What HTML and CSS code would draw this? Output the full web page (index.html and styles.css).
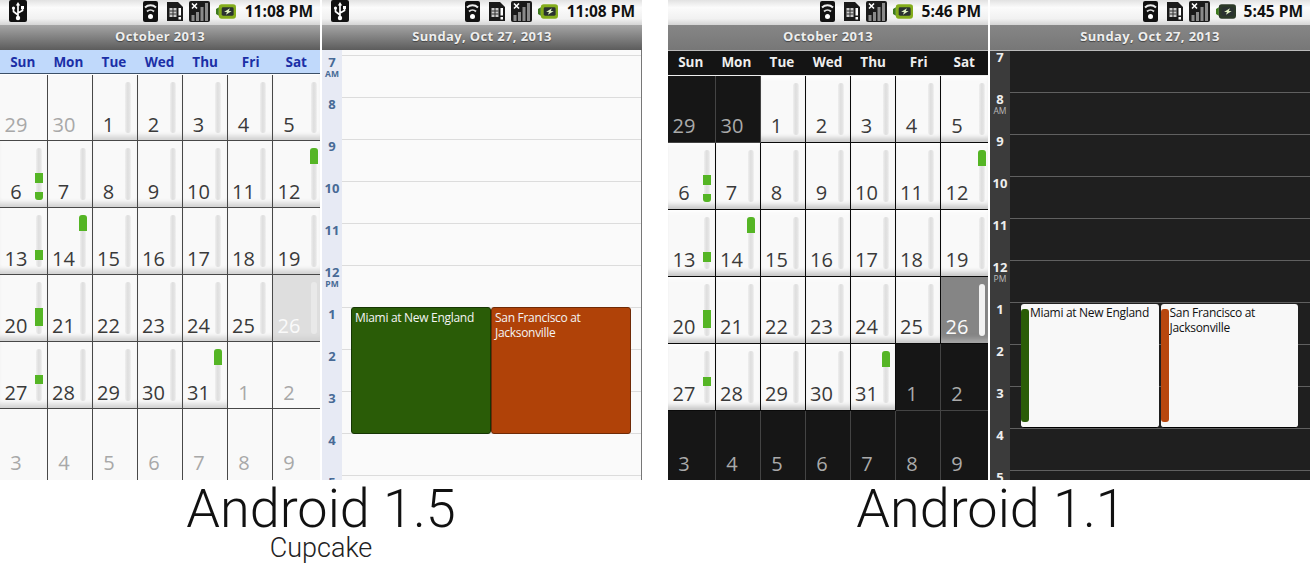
FILE: index.html
```html
<!DOCTYPE html>
<html lang="en">
<head>
<meta charset="utf-8">
<title>Android calendar comparison</title>
<link rel="stylesheet" href="styles.css">
</head>
<body>
<svg class="defs" aria-hidden="true">
  <symbol id="usb" viewBox="0 0 18 22"><rect width="18" height="22" rx="2" fill="#111"/><path d="M9 19V5M9 15L4.5 11.5V9M9 13L13.500 10.500V8.500" fill="none" stroke="#fff" stroke-width="1.700"/><path d="M9 2l2.200 3.500H6.800z" fill="#fff"/><circle cx="9" cy="18" r="2.200" fill="#fff"/><circle cx="4.500" cy="8" r="1.600" fill="#fff"/><rect x="12" y="6" width="3" height="3" fill="#fff"/></symbol>
  <symbol id="wifi" viewBox="0 0 15 21"><rect width="15" height="21" rx="2" fill="#111"/><path d="M2 6.500a8 8 0 0 1 11 0" fill="none" stroke="#eee" stroke-width="2"/><path d="M4 10.500a5 5 0 0 1 7 0" fill="none" stroke="#ddd" stroke-width="1.800"/><circle cx="7.500" cy="15.500" r="2.500" fill="#fff"/></symbol>
  <symbol id="sim" viewBox="0 0 16 21"><path d="M0 1h11l5 5v14H0z" fill="#1a1a1a"/><rect x="2.500" y="7" width="7" height="9" fill="#ccc"/><path d="M2.500 10h7M2.500 13h7M6 7v9" stroke="#333"/><rect x="11.500" y="7" width="2.500" height="7.500" fill="#fff"/><rect x="11.500" y="16" width="2.500" height="2.500" fill="#fff"/></symbol>
  <symbol id="signal" viewBox="0 0 21 21"><rect width="21" height="21" rx="2" fill="#1a1a1a"/><path d="M3 2.500l5 5M8 2.500l-5 5" stroke="#fff" stroke-width="1.600"/><rect x="2.500" y="14" width="3" height="6" fill="#8a8a8a"/><rect x="7" y="11" width="3" height="9" fill="#8a8a8a"/><rect x="11.500" y="6" width="3" height="14" fill="#8a8a8a"/><rect x="16" y="2" width="3" height="18" fill="#8a8a8a"/></symbol>
  <symbol id="batt" viewBox="0 0 21 15"><path d="M0 5l3-2v9L0 10z" fill="#3e7a1e"/><rect x="3" y="0" width="18" height="15" rx="3" fill="currentColor"/><rect x="6" y="3" width="12.500" height="9" rx="1.500" fill="#2a3230"/><path d="M14.500 4L8.500 8h3l-1 3 6-4h-3z" fill="#dff0c0"/></symbol>
</svg>

<div class="page">
  <section class="group">
    <div class="screens">
      <div class="screen light">
        <div class="status">
          <svg class="i-usb"><use href="#usb"/></svg>
          <div class="tray">
            <svg class="i-wifi"><use href="#wifi"/></svg>
            <svg class="i-sim"><use href="#sim"/></svg>
            <svg class="i-signal"><use href="#signal"/></svg>
            <svg class="i-batt"><use href="#batt"/></svg>
            <span class="clock">11:08 PM</span>
          </div>
        </div>
        <div class="title">October 2013</div>
        <div class="days"><span>Sun</span><span>Mon</span><span>Tue</span><span>Wed</span><span>Thu</span><span>Fri</span><span>Sat</span></div>
        <div class="month">
          <div class="cell other"><span class="num">29</span></div>
          <div class="cell other"><span class="num">30</span></div>
          <div class="cell"><span class="num">1</span><span class="bar"></span></div>
          <div class="cell"><span class="num">2</span><span class="bar"></span></div>
          <div class="cell"><span class="num">3</span><span class="bar"></span></div>
          <div class="cell"><span class="num">4</span><span class="bar"></span></div>
          <div class="cell"><span class="num">5</span><span class="bar"></span></div>
          <div class="cell"><span class="num">6</span><span class="bar"><i class="ev" style="top:25px;height:10px"></i><i class="ev ev-end" style="top:44px;height:8px"></i></span></div>
          <div class="cell"><span class="num">7</span><span class="bar"></span></div>
          <div class="cell"><span class="num">8</span><span class="bar"></span></div>
          <div class="cell"><span class="num">9</span><span class="bar"></span></div>
          <div class="cell"><span class="num">10</span><span class="bar"></span></div>
          <div class="cell"><span class="num">11</span><span class="bar"></span></div>
          <div class="cell"><span class="num">12</span><span class="bar"><i class="ev ev-start" style="top:0;height:16px"></i></span></div>
          <div class="cell"><span class="num">13</span><span class="bar"><i class="ev" style="top:35px;height:10px"></i></span></div>
          <div class="cell"><span class="num">14</span><span class="bar"><i class="ev ev-start" style="top:0;height:16px"></i></span></div>
          <div class="cell"><span class="num">15</span><span class="bar"></span></div>
          <div class="cell"><span class="num">16</span><span class="bar"></span></div>
          <div class="cell"><span class="num">17</span><span class="bar"></span></div>
          <div class="cell"><span class="num">18</span><span class="bar"></span></div>
          <div class="cell"><span class="num">19</span><span class="bar"></span></div>
          <div class="cell"><span class="num">20</span><span class="bar"><i class="ev" style="top:26px;height:18px"></i></span></div>
          <div class="cell"><span class="num">21</span><span class="bar"></span></div>
          <div class="cell"><span class="num">22</span><span class="bar"></span></div>
          <div class="cell"><span class="num">23</span><span class="bar"></span></div>
          <div class="cell"><span class="num">24</span><span class="bar"></span></div>
          <div class="cell"><span class="num">25</span><span class="bar"></span></div>
          <div class="cell sel"><span class="num">26</span><span class="bar"></span></div>
          <div class="cell"><span class="num">27</span><span class="bar"><i class="ev" style="top:26px;height:9px"></i></span></div>
          <div class="cell"><span class="num">28</span><span class="bar"></span></div>
          <div class="cell"><span class="num">29</span><span class="bar"></span></div>
          <div class="cell"><span class="num">30</span><span class="bar"></span></div>
          <div class="cell"><span class="num">31</span><span class="bar"><i class="ev ev-start" style="top:0;height:16px"></i></span></div>
          <div class="cell other"><span class="num">1</span></div>
          <div class="cell other"><span class="num">2</span></div>
          <div class="cell other"><span class="num">3</span></div>
          <div class="cell other"><span class="num">4</span></div>
          <div class="cell other"><span class="num">5</span></div>
          <div class="cell other"><span class="num">6</span></div>
          <div class="cell other"><span class="num">7</span></div>
          <div class="cell other"><span class="num">8</span></div>
          <div class="cell other"><span class="num">9</span></div>
        </div>
      </div>

      <div class="screen light">
        <div class="status">
          <svg class="i-usb"><use href="#usb"/></svg>
          <div class="tray">
            <svg class="i-wifi"><use href="#wifi"/></svg>
            <svg class="i-sim"><use href="#sim"/></svg>
            <svg class="i-signal"><use href="#signal"/></svg>
            <svg class="i-batt"><use href="#batt"/></svg>
            <span class="clock">11:08 PM</span>
          </div>
        </div>
        <div class="title">Sunday, Oct 27, 2013</div>
        <div class="agenda">
          <div class="hour"><span class="label">7<small>AM</small></span><span class="slot"></span></div>
          <div class="hour"><span class="label">8</span><span class="slot"></span></div>
          <div class="hour"><span class="label">9</span><span class="slot"></span></div>
          <div class="hour"><span class="label">10</span><span class="slot"></span></div>
          <div class="hour"><span class="label">11</span><span class="slot"></span></div>
          <div class="hour"><span class="label">12<small>PM</small></span><span class="slot"></span></div>
          <div class="hour"><span class="label">1</span><span class="slot"></span></div>
          <div class="hour"><span class="label">2</span><span class="slot"></span></div>
          <div class="hour"><span class="label">3</span><span class="slot"></span></div>
          <div class="hour"><span class="label">4</span><span class="slot"></span></div>
          <div class="hour"><span class="label">5</span><span class="slot"></span></div>
        </div>
        <div class="events">
          <div class="event green">Miami at New England</div>
          <div class="event orange">San Francisco at Jacksonville</div>
        </div>
      </div>
    </div>
    <h2 class="caption">Android 1.5</h2>
    <p class="sub">Cupcake</p>
  </section>

  <section class="group">
    <div class="screens">
      <div class="screen dark">
        <div class="status">
          <div class="tray">
            <svg class="i-wifi"><use href="#wifi"/></svg>
            <svg class="i-sim"><use href="#sim"/></svg>
            <svg class="i-signal"><use href="#signal"/></svg>
            <svg class="i-batt"><use href="#batt"/></svg>
            <span class="clock">5:46 PM</span>
          </div>
        </div>
        <div class="title">October 2013</div>
        <div class="days"><span>Sun</span><span>Mon</span><span>Tue</span><span>Wed</span><span>Thu</span><span>Fri</span><span>Sat</span></div>
        <div class="month">
          <div class="cell other"><span class="num">29</span></div>
          <div class="cell other"><span class="num">30</span></div>
          <div class="cell"><span class="num">1</span><span class="bar"></span></div>
          <div class="cell"><span class="num">2</span><span class="bar"></span></div>
          <div class="cell"><span class="num">3</span><span class="bar"></span></div>
          <div class="cell"><span class="num">4</span><span class="bar"></span></div>
          <div class="cell"><span class="num">5</span><span class="bar"></span></div>
          <div class="cell"><span class="num">6</span><span class="bar"><i class="ev" style="top:25px;height:10px"></i><i class="ev ev-end" style="top:44px;height:8px"></i></span></div>
          <div class="cell"><span class="num">7</span><span class="bar"></span></div>
          <div class="cell"><span class="num">8</span><span class="bar"></span></div>
          <div class="cell"><span class="num">9</span><span class="bar"></span></div>
          <div class="cell"><span class="num">10</span><span class="bar"></span></div>
          <div class="cell"><span class="num">11</span><span class="bar"></span></div>
          <div class="cell"><span class="num">12</span><span class="bar"><i class="ev ev-start" style="top:0;height:16px"></i></span></div>
          <div class="cell"><span class="num">13</span><span class="bar"><i class="ev" style="top:35px;height:10px"></i></span></div>
          <div class="cell"><span class="num">14</span><span class="bar"><i class="ev ev-start" style="top:0;height:16px"></i></span></div>
          <div class="cell"><span class="num">15</span><span class="bar"></span></div>
          <div class="cell"><span class="num">16</span><span class="bar"></span></div>
          <div class="cell"><span class="num">17</span><span class="bar"></span></div>
          <div class="cell"><span class="num">18</span><span class="bar"></span></div>
          <div class="cell"><span class="num">19</span><span class="bar"></span></div>
          <div class="cell"><span class="num">20</span><span class="bar"><i class="ev" style="top:26px;height:18px"></i></span></div>
          <div class="cell"><span class="num">21</span><span class="bar"></span></div>
          <div class="cell"><span class="num">22</span><span class="bar"></span></div>
          <div class="cell"><span class="num">23</span><span class="bar"></span></div>
          <div class="cell"><span class="num">24</span><span class="bar"></span></div>
          <div class="cell"><span class="num">25</span><span class="bar"></span></div>
          <div class="cell sel"><span class="num">26</span><span class="bar"></span></div>
          <div class="cell"><span class="num">27</span><span class="bar"><i class="ev" style="top:26px;height:9px"></i></span></div>
          <div class="cell"><span class="num">28</span><span class="bar"></span></div>
          <div class="cell"><span class="num">29</span><span class="bar"></span></div>
          <div class="cell"><span class="num">30</span><span class="bar"></span></div>
          <div class="cell"><span class="num">31</span><span class="bar"><i class="ev ev-start" style="top:0;height:16px"></i></span></div>
          <div class="cell other"><span class="num">1</span></div>
          <div class="cell other"><span class="num">2</span></div>
          <div class="cell other"><span class="num">3</span></div>
          <div class="cell other"><span class="num">4</span></div>
          <div class="cell other"><span class="num">5</span></div>
          <div class="cell other"><span class="num">6</span></div>
          <div class="cell other"><span class="num">7</span></div>
          <div class="cell other"><span class="num">8</span></div>
          <div class="cell other"><span class="num">9</span></div>
        </div>
      </div>

      <div class="screen dark">
        <div class="status">
          <div class="tray">
            <svg class="i-wifi"><use href="#wifi"/></svg>
            <svg class="i-sim"><use href="#sim"/></svg>
            <svg class="i-signal"><use href="#signal"/></svg>
            <svg class="i-batt i-batt-low"><use href="#batt"/></svg>
            <span class="clock">5:45 PM</span>
          </div>
        </div>
        <div class="title">Sunday, Oct 27, 2013</div>
        <div class="agenda">
          <div class="hour"><span class="label">7</span><span class="slot"></span></div>
          <div class="hour"><span class="label">8<small>AM</small></span><span class="slot"></span></div>
          <div class="hour"><span class="label">9</span><span class="slot"></span></div>
          <div class="hour"><span class="label">10</span><span class="slot"></span></div>
          <div class="hour"><span class="label">11</span><span class="slot"></span></div>
          <div class="hour"><span class="label">12<small>PM</small></span><span class="slot"></span></div>
          <div class="hour"><span class="label">1</span><span class="slot"></span></div>
          <div class="hour"><span class="label">2</span><span class="slot"></span></div>
          <div class="hour"><span class="label">3</span><span class="slot"></span></div>
          <div class="hour"><span class="label">4</span><span class="slot"></span></div>
          <div class="hour"><span class="label">5</span><span class="slot"></span></div>
        </div>
        <div class="events">
          <div class="event green">Miami at New England</div>
          <div class="event orange">San Francisco at Jacksonville</div>
        </div>
      </div>
    </div>
    <h2 class="caption caption-alt">Android 1.1</h2>
  </section>
</div>
</body>
</html>
```

FILE: styles.css
```css
* { box-sizing: border-box; }

html, body {
  margin: 0;
  background: #fff;
  overflow: hidden;
}

.defs {
  position: absolute;
  width: 0;
  height: 0;
}

.page {
  display: flex;
  gap: 26px;
  width: 1310px;
  height: 563px;
  font-family: "Open Sans", "Noto Sans", sans-serif;
}

.group {
  width: 642px;
}

.screens {
  display: flex;
  gap: 2px;
}

.screen {
  position: relative;
  display: flex;
  flex-direction: column;
  width: 320px;
  height: 480px;
  overflow: hidden;
}

/* status bar */
.status {
  display: flex;
  align-items: center;
  justify-content: space-between;
  flex: none;
  height: 25px;
  padding: 0 7px 3px 9px;
  background: linear-gradient(#e2e2e2, #fbfbfb 30%, #f1f1f1 75%, #d4d4d4);
}

.tray {
  display: flex;
  align-items: center;
  margin-left: auto;
}

.i-usb { width: 18px; height: 22px; }
.i-wifi { width: 15px; height: 21px; margin-right: 9px; }
.i-sim { width: 16px; height: 21px; margin-right: 6px; }
.i-signal { width: 21px; height: 21px; margin-right: 6px; }
.i-batt { width: 20px; height: 15px; margin-right: 9px; color: #84ad1c; }
.i-batt-low { color: #2c3a28; margin-right: 8px; }

.clock {
  font-size: 15.500px;
  font-weight: 700;
  line-height: 20px;
  color: #111;
  white-space: nowrap;
}

/* title */
.title {
  flex: none;
  height: 25px;
  font-size: 13px;
  font-weight: 700;
  line-height: 22px;
  letter-spacing: 0.35px;
  text-align: center;
  color: #eee;
  text-shadow: 0 1px 1px #444;
}

.light .title { background: linear-gradient(#a5a5a5, #5c5c5c); }
.dark .title { background: linear-gradient(#868686, #777); }

/* weekdays */
.days {
  display: flex;
  flex: none;
  padding-right: 1px;
  font-size: 13.500px;
  font-weight: 700;
  text-align: center;
}

.days span { flex: 1; }

.light .days {
  height: 25px;
  line-height: 25px;
  color: #1b2fa6;
  background: #c0d9fb;
  border-bottom: 1px solid #fff;
  box-shadow: inset 0 -1px 0 #3c5068;
}

.dark .days {
  height: 26px;
  line-height: 23px;
  color: #eee;
  background: #141414;
  border-top: 1px solid #bbb;
  border-bottom: 1px solid #eee;
}

/* month grid */
.month {
  display: grid;
  flex: 1;
  grid-template-columns: 48px repeat(5, 45px) 47px;
  grid-template-rows: 66px repeat(4, 67px) 1fr;
}

.cell {
  display: flex;
  align-items: flex-end;
  justify-content: space-between;
  padding: 7px 5px 7px 0;
  border-right: 1px solid #484848;
  border-bottom: 1px solid #484848;
  background: #f9f9f9;
  box-shadow: inset 0 -7px 5px -3px #d2d2d2;
}

.cell:nth-child(7n+1) { padding-right: 4px; }
.cell:nth-child(7n) { padding-right: 2px; border-right: 0; }
.cell:nth-last-child(-n+7) { padding-bottom: 9px; border-bottom: 0; }

.num {
  width: 32px;
  margin-bottom: -2px;
  font-size: 20px;
  line-height: 20px;
  text-align: center;
  color: #3a3a3a;
}

.other { box-shadow: none; }
.other .num { color: #a8a8a8; }

.sel { background: #dedede; }
.sel .num { color: #fafafa; }

.dark .num { margin-bottom: -1px; }
.dark .cell:nth-last-child(-n+7) { padding-bottom: 7px; }
.dark .cell { border-color: #0a0a0a; box-shadow: inset 0 -7px 5px -3px #c8c8c8, inset 0 6px 5px -4px #fff; }
.dark .other { background: #161616; border-color: #444; box-shadow: none; }
.dark .other .num { color: #aaa; }
.dark .sel { background: #858585; box-shadow: inset 0 -7px 5px -3px #a8a8a8; }
.dark .month { grid-template-rows: 67px repeat(4, 67px) 1fr; }

/* event bar in a day cell */
.bar {
  position: relative;
  flex: none;
  align-self: stretch;
  width: 6px;
  margin: 0 1px;
  border-radius: 3px;
  background: linear-gradient(90deg, #efefef, #dfdfdf 40%, #e2e2e2 70%, #f2f2f2);
}

.sel .bar { background: #e9e9e9; }
.dark .sel .bar { background: #f2f2f2; }

.ev {
  position: absolute;
  left: -1px;
  width: 8px;
  background: #55b525;
}

.ev-start { border-radius: 3px 3px 0 0; }
.ev-end { border-radius: 0 0 3px 3px; }

/* day agenda */
.agenda {
  flex: 1;
  overflow: hidden;
}

.light .agenda {
  padding-top: 5px;
  background: #fafafa linear-gradient(90deg, #e7eaf4 20px, transparent 20px);
  border-right: 1px solid #777;
}

.dark .agenda {
  background: #1f1f1f linear-gradient(90deg, #3b3b3b 20px, transparent 20px);
}

.hour {
  display: flex;
  height: 42px;
}

.label {
  flex: none;
  width: 20px;
  font-size: 13px;
  font-weight: 700;
  line-height: 14px;
  text-align: center;
}

.label small {
  display: block;
  font-size: 8.500px;
  line-height: 10px;
}

.slot {
  flex: 1;
  border-top: 1px solid;
}

.light .label { color: #486a96; }
.light .slot { border-color: #dcdcdc; }
.dark .label { color: #eee; }
.dark .label small { font-weight: 400; color: #bbb; }
.dark .slot { border-color: #606060; }
.dark .hour:first-child .slot { border-color: #bbb; }
.dark .hour:first-child .label { box-shadow: inset 0 1px 0 #bbb; }

/* overlaid event blocks */
.events {
  position: absolute;
  display: flex;
}

.light .events { left: 29px; top: 307px; width: 280px; height: 127px; }
.dark .events { left: 31px; top: 304px; width: 277px; height: 124px; gap: 2px; }

.event {
  position: relative;
  flex: 1;
  font-size: 12px;
  letter-spacing: -0.3px;
  line-height: 15px;
  border-radius: 3px;
}

.light .event {
  padding: 2px 3px;
  color: #f4f4f4;
  border: 1px solid;
}

.light .green { background: #2a5c07; border-color: #163604; }
.light .orange { background: #b04208; border-color: #6f2a06; }

.dark .event {
  padding: 1px 2px 0 9px;
  color: #111;
  background: #f8f8f8;
  border-bottom: 1px solid #000;
}

.dark .event::before {
  content: "";
  position: absolute;
  left: 0;
  top: 5px;
  bottom: 5px;
  width: 8px;
  border-radius: 3px;
}

.dark .green::before { background: #2a5c07; }
.dark .orange::before { background: #b8470e; }

/* captions */
.caption {
  margin: 2px 0 0;
  font-family: Roboto, sans-serif;
  font-size: 54px;
  font-weight: 300;
  line-height: 53px;
  text-align: center;
  color: #111;
}

.caption-alt { padding-left: 4px; }

.sub {
  margin: 0;
  font-family: Roboto, sans-serif;
  font-size: 27px;
  font-weight: 300;
  line-height: 26px;
  text-align: center;
  color: #222;
}
```
